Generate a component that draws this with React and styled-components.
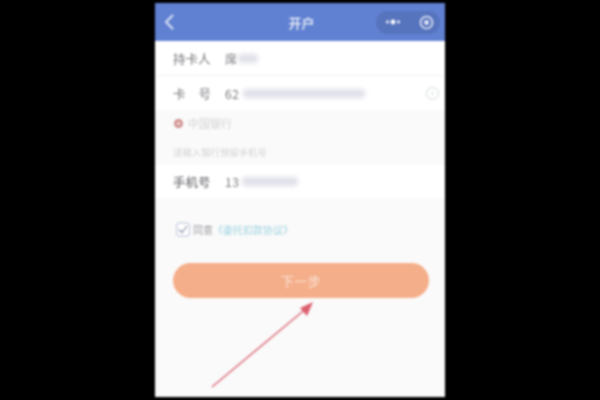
import React from "react";
import styled, { createGlobalStyle } from "styled-components";

const GlobalStyle = createGlobalStyle`
  html, body {
    margin: 0;
    height: 100%;
    background: #000;
    font-family: "Noto Sans CJK SC", "Liberation Sans", sans-serif;
  }
  #root { height: 100%; }
`;

const Page = styled.div`
  width: 600px;
  height: 400px;
  display: flex;
  justify-content: center;
  padding-top: 3px;
  box-sizing: border-box;
  overflow: hidden;
  background: #000;
`;

const Phone = styled.div`
  position: relative;
  width: 290px;
  height: 394px;
  background: #fafafa;
  display: flex;
  flex-direction: column;
  filter: blur(0.8px);
`;

const Header = styled.header`
  height: 38px;
  flex: none;
  background: #6081d2;
  display: flex;
  align-items: center;
  padding: 0 5px 0 9px;
  color: #fff;
`;

const Back = styled.svg`
  width: 11px;
  height: 18px;
  flex: none;
`;

const Title = styled.h1`
  flex: 1;
  margin: 0 0 0 52px;
  text-align: center;
  font-size: 13px;
  font-weight: 500;
  color: #f2f4fb;
`;

const Capsule = styled.div`
  width: 64px;
  height: 23px;
  border-radius: 12px;
  background: #5673bd;
  display: flex;
  align-items: center;
  justify-content: space-between;
  padding: 0 6px 0 9px;
  box-sizing: border-box;
`;

const Row = styled.div`
  display: flex;
  align-items: center;
  background: #fff;
  height: ${(p) => p.$height}px;
  padding-left: 18px;
  font-size: 12.5px;
  color: #77777c;
  border-bottom: ${(p) => (p.$line ? "1px solid #f3f3f3" : "none")};
  box-sizing: border-box;
`;

const Label = styled.span`
  width: 38px;
  flex: none;
  display: flex;
  justify-content: space-between;
  white-space: nowrap;
  font-weight: ${(p) => (p.$strong ? 500 : 400)};
`;

const Value = styled.span`
  margin-left: 14px;
  font-size: 12px;
  letter-spacing: 0.6px;
  color: #77787c;
`;

const Smudge = styled.span`
  width: ${(p) => p.$width}px;
  height: 9px;
  margin-left: ${(p) => p.$gap}px;
  border-radius: 4px;
  background: #e0e0ea;
  filter: blur(2px);
`;

const InfoDot = styled.span`
  margin-left: auto;
  margin-right: 6px;
  width: 11px;
  height: 11px;
  border-radius: 50%;
  border: 1px solid #d4d9d9;
  color: #ccd1d1;
  font-size: 8px;
  line-height: 11px;
  text-align: center;
  font-family: "Liberation Sans", sans-serif;
`;

const BankLine = styled.div`
  display: flex;
  align-items: center;
  gap: 5px;
  height: 26px;
  padding-left: 19px;
  font-size: 11px;
  color: #d3d3d3;
`;

const BankMark = styled.span`
  width: 9px;
  height: 9px;
  border-radius: 50%;
  background: #cf8f8f;
  display: flex;
  align-items: center;
  justify-content: center;
  &::after {
    content: "";
    width: 3px;
    height: 3px;
    background: #f3dede;
  }
`;

const Hint = styled.div`
  height: 29px;
  padding: 10px 0 0 18px;
  box-sizing: border-box;
  font-size: 9.4px;
  line-height: 13px;
  color: #d3d3d3;
`;

const Agree = styled.label`
  display: flex;
  align-items: center;
  gap: 3px;
  margin: 22px 0 0 21px;
  height: 18px;
  font-size: 10px;
  color: #9a9ba0;
`;

const Check = styled.svg`
  width: 14px;
  height: 15px;
  flex: none;
`;

const Link = styled.span`
  color: #9fd3e0;
`;

const NextButton = styled.button`
  margin: 25px 16px 0 18px;
  height: 35px;
  border: none;
  border-radius: 18px;
  background: #f5ae8a;
  color: #f9e3d6;
  font-family: inherit;
  font-size: 13px;
  letter-spacing: 0.5px;
`;

const Arrow = styled.svg`
  position: absolute;
  left: 50px;
  top: 295px;
  width: 115px;
  height: 95px;
`;

export default function App() {
  return (
    <>
      <GlobalStyle />
      <Page>
        <Phone>
          <Header>
            <Back viewBox="0 0 11 18">
              <path d="M9 2 2 9l7 7" fill="none" stroke="#dfe6f7" strokeWidth="1.8" />
            </Back>
            <Title>开户</Title>
            <Capsule>
              <svg width="16" height="6" viewBox="0 0 16 6">
                <circle cx="2.5" cy="3" r="1.4" fill="#fff" />
                <circle cx="8" cy="3" r="2.4" fill="#fff" />
                <circle cx="13.5" cy="3" r="1.4" fill="#fff" />
              </svg>
              <svg width="15" height="15" viewBox="0 0 15 15">
                <circle cx="7.5" cy="7.5" r="6" fill="none" stroke="#e8ecf8" strokeWidth="1.6" />
                <circle cx="7.5" cy="7.5" r="2.4" fill="#e8ecf8" />
              </svg>
            </Capsule>
          </Header>
          <Row $height={35} $line>
            <Label>持卡人</Label>
            <Value>席</Value>
            <Smudge $width={20} $gap={0} />
          </Row>
          <Row $height={34}>
            <Label>
              <span>卡</span>
              <span>号</span>
            </Label>
            <Value>62</Value>
            <Smudge $width={122} $gap={3} />
            <InfoDot>i</InfoDot>
          </Row>
          <BankLine>
            <BankMark />
            中国银行
          </BankLine>
          <Hint>请输入银行预留手机号</Hint>
          <Row $height={33}>
            <Label $strong>手机号</Label>
            <Value>13</Value>
            <Smudge $width={56} $gap={2} />
          </Row>
          <Agree>
            <Check viewBox="0 0 14 15">
              <rect x="0.7" y="1" width="12.6" height="13" rx="2" fill="#fff" stroke="#b4bdd5" />
              <path d="M3 7.5 6 10.5 11 4" fill="none" stroke="#8b93a8" strokeWidth="1.2" />
            </Check>
            <span>
              同意<Link>《委托扣款协议》</Link>
            </span>
          </Agree>
          <NextButton>下一步</NextButton>
          <Arrow viewBox="0 0 115 95">
            <path d="M7 89 103 9" stroke="#dc6f7c" strokeWidth="1.6" fill="none" />
            <path d="M108 4 95 10 102 18Z" fill="#dc5f70" />
          </Arrow>
        </Phone>
      </Page>
    </>
  );
}
